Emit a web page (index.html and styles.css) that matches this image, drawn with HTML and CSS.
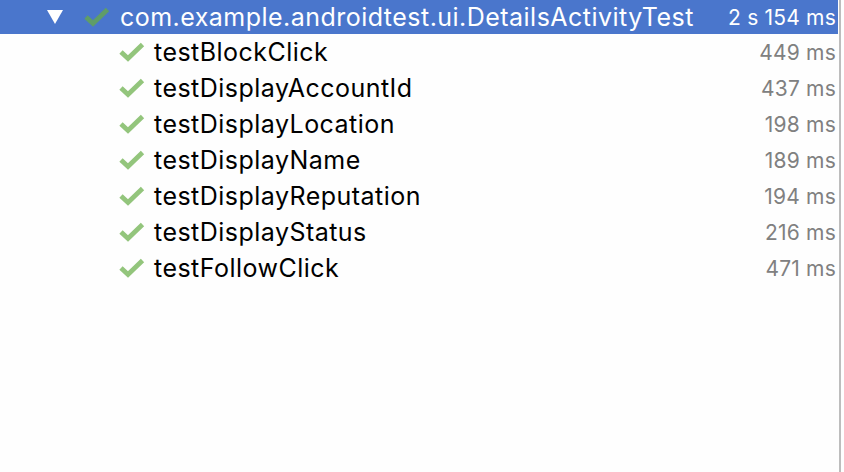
FILE: index.html
```html
<!DOCTYPE html>
<html>
<head>
<meta charset="utf-8">
<link rel="stylesheet" href="styles.css">
</head>
<body>
<div class="panel">
  <div class="tree">
    <div class="row root selected">
      <span class="arrow"></span>
      <svg class="check" viewBox="0 0 26 20"><path d="M2 10 L9 16.5 L23.5 2.5"/></svg>
      <span class="name">com.example.androidtest.ui.DetailsActivityTest</span>
      <span class="time">2 s 154 ms</span>
    </div>
    <div class="row child">
      <svg class="check" viewBox="0 0 26 20"><path d="M2 10 L9 16.5 L23.5 2.5"/></svg>
      <span class="name">testBlockClick</span>
      <span class="time">449 ms</span>
    </div>
    <div class="row child">
      <svg class="check" viewBox="0 0 26 20"><path d="M2 10 L9 16.5 L23.5 2.5"/></svg>
      <span class="name">testDisplayAccountId</span>
      <span class="time">437 ms</span>
    </div>
    <div class="row child">
      <svg class="check" viewBox="0 0 26 20"><path d="M2 10 L9 16.5 L23.5 2.5"/></svg>
      <span class="name">testDisplayLocation</span>
      <span class="time">198 ms</span>
    </div>
    <div class="row child">
      <svg class="check" viewBox="0 0 26 20"><path d="M2 10 L9 16.5 L23.5 2.5"/></svg>
      <span class="name">testDisplayName</span>
      <span class="time">189 ms</span>
    </div>
    <div class="row child">
      <svg class="check" viewBox="0 0 26 20"><path d="M2 10 L9 16.5 L23.5 2.5"/></svg>
      <span class="name">testDisplayReputation</span>
      <span class="time">194 ms</span>
    </div>
    <div class="row child">
      <svg class="check" viewBox="0 0 26 20"><path d="M2 10 L9 16.5 L23.5 2.5"/></svg>
      <span class="name">testDisplayStatus</span>
      <span class="time">216 ms</span>
    </div>
    <div class="row child">
      <svg class="check" viewBox="0 0 26 20"><path d="M2 10 L9 16.5 L23.5 2.5"/></svg>
      <span class="name">testFollowClick</span>
      <span class="time">471 ms</span>
    </div>
  </div>
  <div class="divider"></div>
</div>
</body>
</html>
```
FILE: styles.css
```css
html, body {
  margin: 0;
  padding: 0;
  background: #fefefe;
}
.panel {
  display: flex;
  width: 844px;
  height: 472px;
  overflow: hidden;
  font-family: Inter, "Noto Sans", sans-serif;
}
.tree {
  width: 838px;
  display: flex;
  flex-direction: column;
}
.divider {
  width: 2px;
  margin-left: 1px;
  background: #bdbdbd;
}
.row {
  display: flex;
  align-items: center;
  height: 36px;
  color: #000;
  font-size: 25px;
}
.row.root {
  height: 34px;
}
.selected {
  background: #4a76cc;
  color: #fff;
}
.arrow {
  width: 0;
  height: 0;
  margin-left: 47px;
  border-left: 8px solid transparent;
  border-right: 8px solid transparent;
  border-top: 14px solid #fff;
}
.check {
  width: 26px;
  height: 20px;
  flex: none;
  fill: none;
  stroke: #93c57c;
  stroke-width: 4.8;
  stroke-linecap: butt;
  stroke-linejoin: miter;
}
.root .check {
  margin-left: 21px;
  stroke: #5f9d68;
}
.child .check {
  margin-left: 119px;
}
.name {
  margin-left: 9px;
  flex: 1;
  letter-spacing: 0.47px;
}
.root .name {
  margin-left: 10px;
}
.time {
  margin-right: 2px;
  color: #808080;
  font-size: 21px;
  letter-spacing: 0.2px;
}
.root .time {
  color: #fff;
}
```
